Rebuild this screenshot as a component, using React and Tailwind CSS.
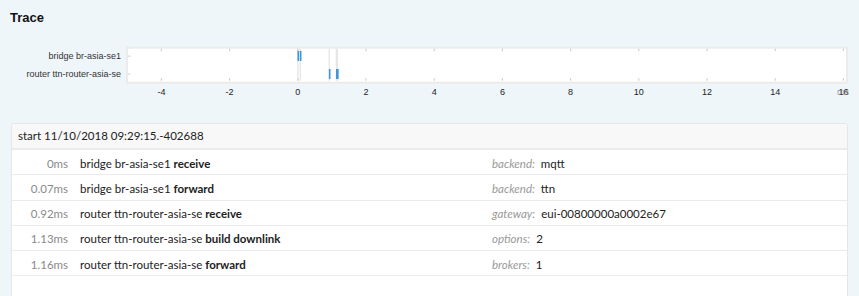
import React from "react";

const X0 = 297.8;
const K = 34.1;
const xv = (v) => X0 + K * v;

const events = [
  { t: 0, row: 0 },
  { t: 0.07, row: 0 },
  { t: 0.92, row: 1 },
  { t: 1.13, row: 1 },
  { t: 1.16, row: 1 },
];

const ticks = [-4, -2, 0, 2, 4, 6, 8, 10, 12, 14, 16];

function Chart() {
  const top = 7.7;
  const bottom = 41.7;
  return (
    <svg width="859" height="83" className="block" style={{ fontFamily: '"Liberation Sans", Arial, sans-serif' }}>
      <rect x="127" y="7.7" width="720" height="35" fill="#ffffff" stroke="#ebebeb" strokeWidth="2" />
      {events.map((e, i) => (
        <rect key={"g" + i} x={xv(e.t) - 0.6} y={top + 1} width="1.3" height={bottom - top - 2} fill="#e6e6e6" />
      ))}
      {ticks.map((t) => (
        <g key={"t" + t}>
          <rect x={xv(t) - 0.6} y={top + 1} width="1.2" height="2.5" fill="#cfcfcf" />
          <rect x={xv(t) - 0.6} y={bottom - 3.5} width="1.2" height="2.5" fill="#cfcfcf" />
        </g>
      ))}
      <rect x="128" y="15.6" width="2.5" height="1" fill="#cfcfcf" />
      <rect x="128" y="33.6" width="2.5" height="1" fill="#cfcfcf" />
      {events.map((e, i) => (
        <rect key={"b" + i} x={xv(e.t) - 0.3} y={e.row === 0 ? 11 : 29} width="1.6" height="10" fill="#3b96dc" />
      ))}
      <text x="121" y="19.3" textAnchor="end" fontSize="9" fill="#333">bridge br-asia-se1</text>
      <text x="121" y="37.3" textAnchor="end" fontSize="9" fill="#333">router ttn-router-asia-se</text>
      {ticks.map((t) => (
        <text key={"l" + t} x={xv(t)} y="55" textAnchor="middle" fontSize="9" fill="#222">
          {t}
        </text>
      ))}
      <text x="849" y="55" textAnchor="end" fontSize="9" fill="#888" opacity="0.8">ms</text>
    </svg>
  );
}

const rows = [
  { time: "0ms", kind: "bridge br-asia-se1", action: "receive", key: "backend:", value: "mqtt" },
  { time: "0.07ms", kind: "bridge br-asia-se1", action: "forward", key: "backend:", value: "ttn" },
  { time: "0.92ms", kind: "router ttn-router-asia-se", action: "receive", key: "gateway:", value: "eui-00800000a0002e67" },
  { time: "1.13ms", kind: "router ttn-router-asia-se", action: "build downlink", key: "options:", value: "2" },
  { time: "1.16ms", kind: "router ttn-router-asia-se", action: "forward", key: "brokers:", value: "1" },
];

export default function App() {
  return (
    <div className="w-[859px] h-[296px] overflow-hidden bg-[#eff6fa]">
      <div className="h-[40px] pl-[10px] pt-[10px]">
        <h2 className="text-[13px] leading-[16px] font-bold text-[#111] font-['Liberation_Sans',Arial,sans-serif]">Trace</h2>
      </div>
      <Chart />
      <div className="mx-[11px] rounded-[3px] border border-[#e6e6e6] bg-white pb-[40px] font-['Lato',sans-serif] text-[11.5px]">
        <div className="h-[26px] flex items-center px-[6px] bg-[#f8f8f8] border-b-2 border-[#ebebeb] rounded-t-[3px] text-[#222]">
          start 11/10/2018 09:29:15.-402688
        </div>
        {rows.map((r, i) => (
          <div key={i} className="h-[25.25px] pt-[2px] flex items-center border-b border-[#ebebeb]">
            <div className="w-[56px] text-right text-[#8a8a8a]">{r.time}</div>
            <div className="w-[424px] pl-[12px] text-[#222]">
              {r.kind} <span className="font-bold">{r.action}</span>
            </div>
            <div className="flex-1">
              <span className="italic text-[#999]">{r.key}</span>
              <span className="ml-[6px] text-[#222]">{r.value}</span>
            </div>
          </div>
        ))}
      </div>
    </div>
  );
}
